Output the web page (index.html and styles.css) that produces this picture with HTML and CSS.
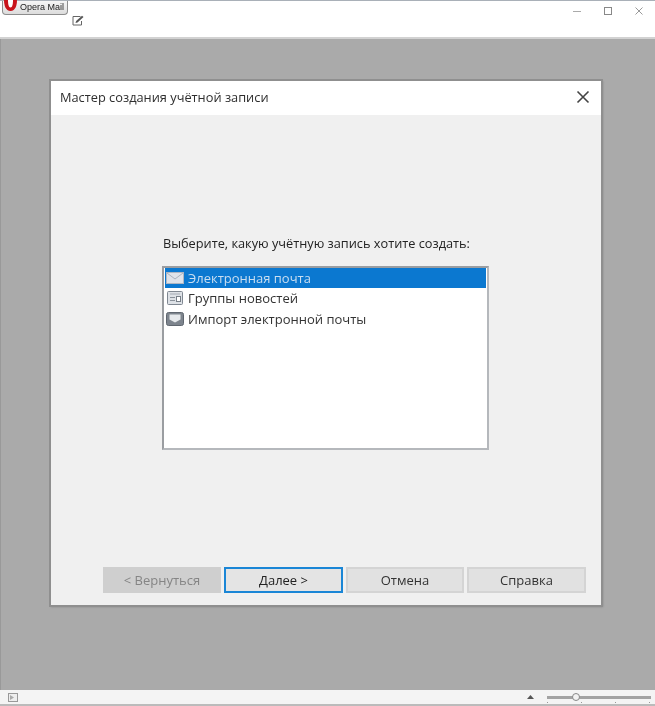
FILE: index.html
```html
<!DOCTYPE html>
<html lang="ru">
<head>
<meta charset="utf-8">
<title>Opera Mail</title>
<link rel="stylesheet" href="styles.css">
</head>
<body>
<div class="app">
  <header class="topbar">
    <div class="top-left">
      <button class="menu-btn">
        <svg class="logo" width="16" height="14" viewBox="0 0 16 14"><path d="M1 0h13c0 5-1.500 11-6.500 11S1 5 1 0z" fill="#c8131b"/><path d="M5 0h5c0 4-.6 7.500-2.500 7.500S5 4 5 0z" fill="#fff"/></svg>
        <span>Opera Mail</span>
      </button>
      <svg class="compose" width="13" height="11" viewBox="0 0 13 11"><path d="M8.500 1.500H1v8.500h8.500V6" fill="none" stroke="#666" stroke-width="1"/><path d="M3.500 8l.6-2L10 .7l1.500 1.400L5.500 7.400z" fill="#555"/></svg>
    </div>
    <div class="win-controls">
      <svg width="10" height="10" viewBox="0 0 10 10"><path d="M1 5.500h8" stroke="#aaa" stroke-width="1"/></svg>
      <svg width="10" height="10" viewBox="0 0 10 10"><rect x="1.500" y="1.500" width="7" height="7" fill="none" stroke="#888" stroke-width="1"/></svg>
      <svg width="10" height="10" viewBox="0 0 10 10"><path d="M1.500 1.500l7 7M8.500 1.500l-7 7" stroke="#999" stroke-width="1" fill="none"/></svg>
    </div>
  </header>
  <main class="workspace">
    <section class="dialog">
      <div class="dialog-title">
        <span>Мастер создания учётной записи</span>
        <svg width="14" height="14" viewBox="0 0 14 14"><path d="M1.500 1.500l11 11M12.500 1.500l-11 11" stroke="#444" stroke-width="1.600" fill="none"/></svg>
      </div>
      <div class="dialog-body">
        <div class="chooser">
          <p class="prompt">Выберите, какую учётную запись хотите создать:</p>
          <ul class="list">
            <li class="item selected">
              <svg width="18" height="14" viewBox="0 0 18 14"><rect x=".5" y="1.500" width="17" height="11" fill="#dfe3ea" stroke="#aeb6c2"/><path d="M1 2l8 6 8-6" fill="none" stroke="#aab2be"/></svg>
              <span>Электронная почта</span>
            </li>
            <li class="item">
              <svg width="18" height="14" viewBox="0 0 18 14"><rect x="1.500" y=".5" width="15" height="13" rx="1" fill="#dde1e6" stroke="#7f8791"/><rect x="4" y="6" width="5" height="1" fill="#8a919a"/><rect x="4" y="9" width="5" height="1" fill="#8a919a"/><rect x="10.500" y="5.500" width="4" height="5" fill="#fff" stroke="#777f88"/><rect x="4" y="2.500" width="10" height="1" fill="#a5abb3"/></svg>
              <span>Группы новостей</span>
            </li>
            <li class="item">
              <svg width="18" height="14" viewBox="0 0 18 14"><rect x=".5" y=".5" width="17" height="13" rx="2" fill="#7d848d" stroke="#5f666f"/><path d="M3.500 2.500h11v5l-5.500 3-5.500-3z" fill="#e6e9ec"/></svg>
              <span>Импорт электронной почты</span>
            </li>
          </ul>
        </div>
        <div class="actions">
          <button class="btn disabled">&lt; Вернуться</button>
          <button class="btn primary">Далее &gt;</button>
          <button class="btn">Отмена</button>
          <button class="btn help">Справка</button>
        </div>
      </div>
    </section>
  </main>
  <footer class="statusbar">
    <span class="panel-toggle"><svg width="4" height="5" viewBox="0 0 4 5"><path d="M0 0l4 2.500L0 5z" fill="#aaa"/></svg></span>
    <div class="zoom">
      <svg width="7" height="4" viewBox="0 0 7 4"><path d="M3.500 0L7 4H0z" fill="#555"/></svg>
      <div class="slider"><span class="ticks"></span><span class="thumb"></span></div>
    </div>
  </footer>
</div>
</body>
</html>
```
FILE: styles.css
```css
* { box-sizing: border-box; }
html, body { margin: 0; padding: 0; }
body { width: 655px; height: 706px; overflow: hidden; background: #fff; font-family: "Open Sans", "Noto Sans", "Liberation Sans", sans-serif; color: #333; }
.app { width: 655px; height: 706px; display: flex; flex-direction: column; filter: blur(.6px); }

.topbar { height: 39px; flex: none; display: flex; justify-content: space-between; background: #fff; border-top: 1px solid #a9b0b8; border-bottom: 2px solid #d2d2d2; }
.top-left { display: flex; flex-direction: column; padding-left: 2px; }
.menu-btn { width: 66px; height: 14px; padding: 0 0 1px; border: 1px solid #8d8d8d; border-top: 0; border-radius: 0 0 4px 4px; background: linear-gradient(#f6f6f6, #dcdcdc); display: flex; align-items: center; font: 9px "Liberation Sans", sans-serif; color: #222; position: relative; }
.menu-btn span { margin-left: 17px; }
.logo { position: absolute; left: 0; top: -1px; }
.compose { margin: 0 0 0 70px; }
.win-controls { display: flex; gap: 21px; padding: 5px 11px 0 0; align-items: flex-start; }

.workspace { flex: 1; min-height: 0; background: #aaa; padding: 41px 53px 0 49px; border-left: 1px solid #999; }
.dialog { height: 526px; display: flex; flex-direction: column; background: #f0f0f0; border: 1px solid #fff; outline: 2px solid #8f8f8f; outline-offset: -1px; box-shadow: 1px 1px 2px #888; }
.dialog-title { height: 34px; flex: none; background: #fff; display: flex; align-items: center; justify-content: space-between; padding: 0 11px 3px 9px; font-size: 12.8px; color: #2e2e2e; }
.dialog-body { flex: 1; min-height: 0; display: flex; flex-direction: column; justify-content: space-between; padding: 119px 13px 12px 52px; }

.chooser { display: flex; flex-direction: column; }
.prompt { margin: 0 0 14px 60px; font-size: 12.75px; line-height: 18px; color: #222; }
.list { list-style: none; margin: 0 0 0 59px; padding: 0 1px; width: 327px; height: 184px; background: #fff; border: 2px solid #b5b8bc; border-top-color: #9a9da1; border-left-color: #9a9da1; }
.item { height: 20.5px; display: flex; align-items: center; gap: 4px; padding-left: 1px; font-size: 13px; color: #333; }
.item.selected { height: 20px; background: #0b78d0; color: #c9deF1; }

.actions { display: flex; gap: 3px; align-items: center; }
.btn { width: 118px; height: 26px; padding: 0 0 1px; font: 13px "Open Sans", sans-serif; color: #333; background: #e1e1e1; border: 2px solid #d4d4d4; }
.btn.disabled { background: #cfcfcf; border-color: #cfcfcf; color: #858585; }
.btn.primary { width: 119px; background: #e4e4e4; border-color: #1a86d6; color: #222; }
.btn.help { width: 119px; }

.statusbar { height: 16px; flex: none; display: flex; justify-content: space-between; align-items: center; background: #f4f4f4; padding: 0 4px 0 8px; border-bottom: 2px solid #bbb; }
.panel-toggle { width: 10px; height: 9px; padding-left: 1px; display: flex; align-items: center; border: 1px solid #999; background: #eee; }
.zoom { display: flex; align-items: center; gap: 13px; }
.slider { width: 104px; height: 3px; background: #a3a3a3; position: relative; }
.ticks { position: absolute; left: 0; right: 0; top: 6px; height: 1px; background: linear-gradient(90deg, #999 1px, transparent 1px) 0 0 / 34px 1px repeat-x; }
.thumb { position: absolute; left: 25px; top: -3px; width: 8px; height: 8px; border-radius: 50%; border: 1px solid #888; background: #f2f2f2; }
```
